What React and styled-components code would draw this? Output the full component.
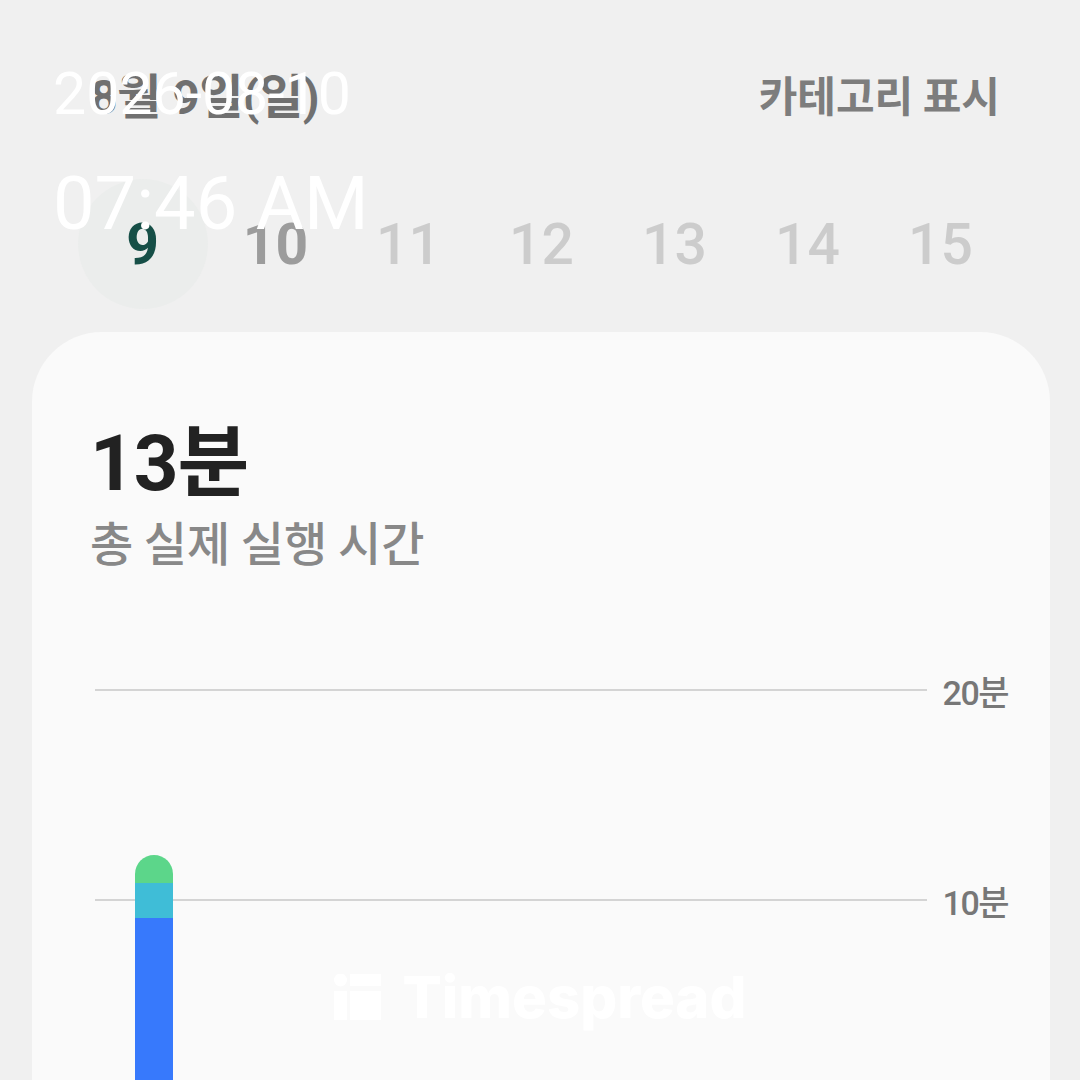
import styled, { createGlobalStyle } from 'styled-components';

// Data
const days = [9, 10, 11, 12, 13, 14, 15];
const selectedDay = 9;

const segments = [
	{ name: 'green', color: '#5cd68a', minutes: 1.33 },
	{ name: 'cyan', color: '#3fbdd7', minutes: 1.67 },
	{ name: 'blue', color: '#3779fc', minutes: 9.14 },
];

const PX_PER_MIN = 21;

const GlobalStyle = createGlobalStyle`
	html, body {
		margin: 0;
		padding: 0;
		background: #f0f0f0;
	}
	body {
		font-family: Roboto, "Noto Sans CJK KR", sans-serif;
	}
`;

const Screen = styled.div`
	position: relative;
	width: 1080px;
	height: 1080px;
	overflow: hidden;
	background: #f0f0f0;
	display: flex;
	flex-direction: column;
`;

const TopBar = styled.div`
	flex-shrink: 0;
	height: 186px;
	display: flex;
	align-items: center;
	justify-content: space-between;
	padding: 0 80px 0 90px;
	box-sizing: border-box;
`;

const DateTitle = styled.div`
	font-family: Roboto, "Noto Sans CJK KR", sans-serif;
	font-size: 48px;
	font-weight: 700;
	color: #707070;
	letter-spacing: -0.5px;
`;

const CategoryToggle = styled.div`
	font-family: "Noto Sans CJK KR", sans-serif;
	font-size: 42px;
	font-weight: 700;
	color: #7d7d7d;
`;

const DayStrip = styled.div`
	flex-shrink: 0;
	display: grid;
	grid-template-columns: repeat(7, 133px);
	grid-template-rows: 116px;
	padding-left: 76px;
	height: 116px;
	margin-bottom: 30px;
	align-items: center;
`;

const Day = styled.div`
	justify-self: center;
	width: 130px;
	height: 130px;
	border-radius: 50%;
	display: flex;
	align-items: center;
	justify-content: center;
	font-family: Roboto, sans-serif;
	font-size: 57px;
	font-weight: ${(p) => (p.$state === 'faded' ? 500 : 700)};
	color: ${(p) => (p.$state === 'selected' ? '#164f47' : p.$state === 'near' ? '#9c9c9c' : '#cccccc')};
	background: ${(p) => (p.$state === 'selected' ? '#ebedec' : 'transparent')};
`;

const Card = styled.div`
	flex: 1;
	min-height: 0;
	overflow: hidden;
	margin: 0 30px 0 32px;
	border-radius: 70px 70px 0 0;
	background: #fafafa;
	padding: 93px 42px 0 58px;
	display: flex;
	flex-direction: column;
`;

const Total = styled.div`
	font-family: Roboto, "Noto Sans CJK KR", sans-serif;
	font-size: 78px;
	font-weight: 700;
	line-height: 1;
	color: #222;
	letter-spacing: -1px;
`;

const TotalLabel = styled.div`
	margin-top: 14px;
	font-family: "Noto Sans CJK KR", sans-serif;
	font-size: 47px;
	font-weight: 500;
	line-height: 1;
	color: #888;
`;

const Chart = styled.div`
	flex-shrink: 0;
	position: relative;
	margin: 111px 0 0 5px;
	display: flex;
	flex-direction: column;
	gap: 180px;
`;

const GridRow = styled.div`
	height: 30px;
	display: flex;
	align-items: center;
`;

const GridLine = styled.div`
	flex: 1;
	height: 2px;
	background: #d4d4d4;
`;

const AxisLabel = styled.div`
	margin-left: 16px;
	font-family: Roboto, "Noto Sans CJK KR", sans-serif;
	font-size: 34px;
	font-weight: 500;
	color: #777;
	letter-spacing: -1.5px;
`;

const Bar = styled.div`
	position: absolute;
	left: 40px;
	bottom: 15px;
	width: 38px;
	border-radius: 19px 19px 0 0;
	overflow: hidden;
	display: flex;
	flex-direction: column;
`;

const Segment = styled.div`
	background: ${(p) => p.$color};
`;

const Watermark = styled.div`
	position: absolute;
	left: 0;
	right: 0;
	top: 962px;
	display: flex;
	justify-content: center;
	align-items: center;
	gap: 22px;
	color: #ffffff;
	font-family: Inter, sans-serif;
	font-size: 58px;
	font-weight: 800;
	letter-spacing: 0;
	pointer-events: none;
`;

const Stamp = styled.div`
	position: absolute;
	top: 64px;
	left: 53px;
	display: flex;
	flex-direction: column;
	color: #ffffff;
	font-family: Roboto, sans-serif;
	font-weight: 400;
	line-height: 1;
`;

const StampDate = styled.div`
	font-size: 59px;
`;

const StampTime = styled.div`
	margin-top: 44px;
	font-size: 74px;
`;

function dayState(d) {
	if (d === selectedDay) return 'selected';
	if (d === selectedDay + 1) return 'near';
	return 'faded';
}

function App() {
	return (
		<Screen>
			<GlobalStyle />
			<TopBar>
				<DateTitle>8월 9일(일)</DateTitle>
				<CategoryToggle>카테고리 표시</CategoryToggle>
			</TopBar>
			<DayStrip>
				{days.map((d) => (
					<Day key={d} $state={dayState(d)}>{d}</Day>
				))}
			</DayStrip>
			<Card>
				<Total>13분</Total>
				<TotalLabel>총 실제 실행 시간</TotalLabel>
				<Chart>
					{['20분', '10분', '0분'].map((label) => (
						<GridRow key={label}>
							<GridLine />
							<AxisLabel>{label}</AxisLabel>
						</GridRow>
					))}
					<Bar>
						{segments.map((s) => (
							<Segment key={s.name} $color={s.color} style={{ height: s.minutes * PX_PER_MIN }} />
						))}
					</Bar>
				</Chart>
			</Card>
			<Watermark>
				<svg width="47" height="46" viewBox="0 0 47 46">
					<circle cx="6.5" cy="6" r="6.5" fill="#fff" />
					<rect x="16" y="0" width="31" height="12" fill="#fff" />
					<rect x="0" y="17" width="13" height="29" fill="#fff" />
					<rect x="16" y="17" width="31" height="29" fill="#fff" />
				</svg>
				<span>Timespread</span>
			</Watermark>
			<Stamp>
				<StampDate>2026-08-10</StampDate>
				<StampTime>07:46 AM</StampTime>
			</Stamp>
		</Screen>
	);
}

export default App;
